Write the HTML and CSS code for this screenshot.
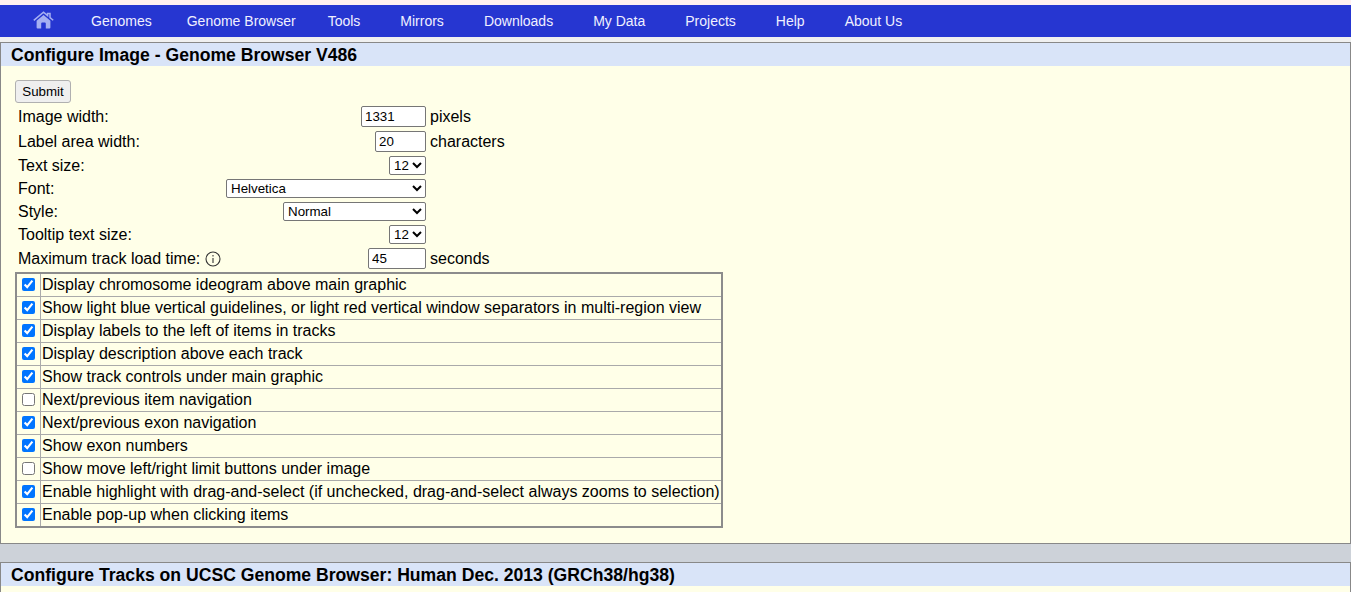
FILE: index.html
```html
<!DOCTYPE html>
<html lang="en">
<head>
<meta charset="utf-8">
<title>Configure Image - Genome Browser V486</title>
<link rel="stylesheet" href="styles.css">
</head>
<body>
<nav class="nav">
  <a class="nav-home" href="#" aria-label="Home">
    <svg class="home-icon" viewBox="0 0 21 18" width="21" height="18">
      <path class="home-roof" d="M0.8 9.3 L10.5 1.2 L14.6 4.6 L14.6 2.4 L17 2.4 L17 6.6 L20.2 9.3" />
      <path class="home-body" d="M3.6 9.8 L10.5 4 L17.4 9.8 L17.4 16.4 Q17.4 17.4 16.4 17.4 L12.8 17.4 L12.8 12.6 Q12.8 11.6 11.8 11.6 L9.2 11.6 Q8.2 11.6 8.2 12.6 L8.2 17.4 L4.6 17.4 Q3.6 17.4 3.6 16.4 Z" />
    </svg>
  </a>
  <a class="nav-link nav-genomes" href="#">Genomes</a>
  <a class="nav-link nav-browser" href="#">Genome Browser</a>
  <a class="nav-link" href="#">Tools</a>
  <a class="nav-link" href="#">Mirrors</a>
  <a class="nav-link" href="#">Downloads</a>
  <a class="nav-link" href="#">My Data</a>
  <a class="nav-link" href="#">Projects</a>
  <a class="nav-link" href="#">Help</a>
  <a class="nav-link" href="#">About Us</a>
</nav>
<main class="page">
  <section class="panel panel-image">
    <h2 class="panel-title">Configure Image - Genome Browser V486</h2>
    <form class="panel-body">
      <button class="submit" type="button">Submit</button>
      <div class="settings">
        <div class="setting">
          <div class="setting-main"><label>Image width:</label><input class="num num-wide" type="text" value="1331"></div>
          <span class="setting-unit">pixels</span>
        </div>
        <div class="setting">
          <div class="setting-main"><label>Label area width:</label><input class="num num-narrow" type="text" value="20"></div>
          <span class="setting-unit">characters</span>
        </div>
        <div class="setting">
          <div class="setting-main"><label>Text size:</label><select class="sel sel-size"><option>12</option></select></div>
        </div>
        <div class="setting">
          <div class="setting-main"><label>Font:</label><select class="sel sel-font"><option>Helvetica</option></select></div>
        </div>
        <div class="setting">
          <div class="setting-main"><label>Style:</label><select class="sel sel-style"><option>Normal</option></select></div>
        </div>
        <div class="setting">
          <div class="setting-main"><label>Tooltip text size:</label><select class="sel sel-size"><option>12</option></select></div>
        </div>
        <div class="setting">
          <div class="setting-main">
            <label class="label-info">Maximum track load time:
              <svg class="info-icon" viewBox="0 0 16 16" width="16" height="16">
                <circle cx="8" cy="8" r="7" />
                <path d="M8 7 V12 M8 4 V5.4" />
              </svg>
            </label>
            <input class="num num-mid" type="text" value="45">
          </div>
          <span class="setting-unit">seconds</span>
        </div>
      </div>
      <table class="options">
        <tr><td class="check"><input type="checkbox" checked></td><td>Display chromosome ideogram above main graphic</td></tr>
        <tr><td class="check"><input type="checkbox" checked></td><td>Show light blue vertical guidelines, or light red vertical window separators in multi-region view</td></tr>
        <tr><td class="check"><input type="checkbox" checked></td><td>Display labels to the left of items in tracks</td></tr>
        <tr><td class="check"><input type="checkbox" checked></td><td>Display description above each track</td></tr>
        <tr><td class="check"><input type="checkbox" checked></td><td>Show track controls under main graphic</td></tr>
        <tr><td class="check"><input type="checkbox"></td><td>Next/previous item navigation</td></tr>
        <tr><td class="check"><input type="checkbox" checked></td><td>Next/previous exon navigation</td></tr>
        <tr><td class="check"><input type="checkbox" checked></td><td>Show exon numbers</td></tr>
        <tr><td class="check"><input type="checkbox"></td><td>Show move left/right limit buttons under image</td></tr>
        <tr><td class="check"><input type="checkbox" checked></td><td>Enable highlight with drag-and-select (if unchecked, drag-and-select always zooms to selection)</td></tr>
        <tr><td class="check"><input type="checkbox" checked></td><td>Enable pop-up when clicking items</td></tr>
      </table>
    </form>
  </section>
  <section class="panel panel-tracks">
    <h2 class="panel-title">Configure Tracks on UCSC Genome Browser: Human Dec. 2013 (GRCh38/hg38)</h2>
  </section>
</main>
</body>
</html>
```
FILE: styles.css
```css
html, body {
  margin: 0;
  padding: 0;
  height: 592px;
  overflow: hidden;
}
body {
  background: #fff0f0;
  padding-top: 5px;
  box-sizing: border-box;
  font-family: "Liberation Sans", Arial, sans-serif;
  font-size: 16px;
  color: #000;
}
.nav {
  display: flex;
  align-items: center;
  height: 32px;
  padding-left: 33px;
  gap: 40px;
  background: #2636d1;
}
.nav-link {
  color: #f0f0ff;
  text-decoration: none;
  font-size: 14px;
}
.nav-home { display: flex; margin-right: -3px; margin-top: -2px; }
.home-roof { fill: none; stroke: #a6b0f2; stroke-width: 1.5; }
.home-body { fill: #a6b0f2; }
.nav-genomes { margin-right: -5px; }
.nav-browser { margin-right: -8px; }
.page {
  background: linear-gradient(#f0f0f0 0, #f0f0f0 5px, #cdd2d9 5px);
  padding-top: 5px;
  height: 550px;
  overflow: hidden;
}
.panel {
  background: #ffffe8;
  border: 1px solid #888;
}
.panel-image { height: 500px; }
.panel-tracks { margin-top: 18px; height: 60px; }
.panel-title {
  margin: 0;
  padding: 1px 0 0 10px;
  box-sizing: border-box;
  height: 23px;
  line-height: 23px;
  background: #d9e4f8;
  font-size: 17.6px;
  font-weight: bold;
}
.panel-body {
  padding: 14px 0 0 14px;
}
.submit {
  display: block;
  width: 56px;
  height: 23px;
  padding: 0;
  font: 13.33px "Liberation Sans", Arial, sans-serif;
  color: #000;
  background: #efefef;
  border: 1px solid #b0b0b0;
  border-radius: 3px;
}
.settings {
  display: flex;
  flex-direction: column;
  gap: 4px;
  margin-top: 3px;
}
.setting {
  display: flex;
  align-items: center;
  gap: 4px;
}
.setting-main {
  display: flex;
  justify-content: space-between;
  align-items: center;
  box-sizing: border-box;
  width: 411px;
  padding-left: 3px;
}
.label-info {
  display: flex;
  align-items: center;
  gap: 5px;
}
.num {
  box-sizing: border-box;
  height: 21px;
  padding: 1px 3px;
  font: 13.33px "Liberation Sans", Arial, sans-serif;
  background: #fff;
  border: 1px solid #767676;
  border-radius: 2px;
}
.num-wide { width: 65px; }
.num-narrow { width: 51px; }
.num-mid { width: 58px; }
.sel {
  box-sizing: border-box;
  height: 19px;
  font: 13.33px "Liberation Sans", Arial, sans-serif;
  background: #fff;
  border: 1px solid #767676;
  border-radius: 2px;
}
.sel-size { width: 37px; }
.sel-font { width: 200px; }
.sel-style { width: 143px; }
.info-icon { fill: none; stroke: #333; stroke-width: 1.1; }
.options {
  border-collapse: collapse;
  border: 2px solid #8c8c8c;
  margin-top: 3px;
  width: 708px;
}
.options td {
  border: 1px solid #aaa;
  height: 22px;
  padding: 0 0 0 1px;
  line-height: 18px;
  white-space: nowrap;
}
.options .check {
  width: 23px;
  padding: 0;
  text-align: center;
}
.options input {
  display: block;
  margin: 0 auto 1px;
}
```
